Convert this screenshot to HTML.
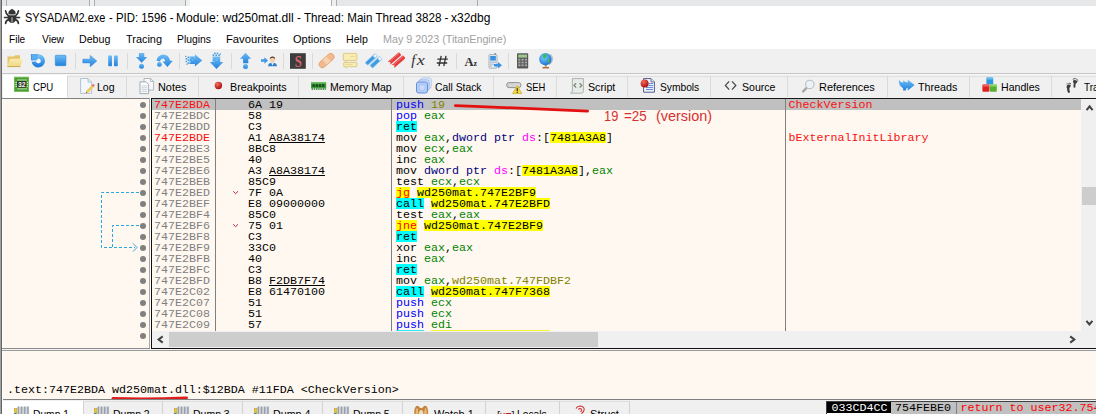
<!DOCTYPE html><html><head><meta charset="utf-8"><title>x32dbg</title><style>
*{box-sizing:border-box}
html,body{margin:0;padding:0}
body{width:1096px;height:414px;overflow:hidden;position:relative;background:#fff;font-family:"Liberation Sans",sans-serif;font-size:12px;color:#000}
div,svg{position:absolute}
svg{overflow:visible}
b{font-weight:normal}
.t{white-space:pre;transform-origin:0 0}
.m{font-family:"Liberation Mono",monospace;font-size:11.67px;line-height:11px;white-space:pre;height:11px}
.m b{display:inline-block;height:10.5px;margin-top:-1px;padding-top:1px;vertical-align:top}
.ad{left:154px;color:#808080}
.ad.red{color:#f81010}
.by{left:248px;color:#000}
.ds{left:396px;color:#000}
.cm{left:788.5px;color:#f81010}
.pp{color:#0000ff}.v{color:#828200}.r{color:#008300}.t2{color:#000080}.s{color:#ff00ff}
.a{background:#ffff00}.c{background:#00ffff}.j{background:#ffff00;color:#ff0000}
u{text-decoration:underline;text-underline-offset:1px;text-decoration-thickness:1px}
.dot{width:6px;height:6px;border-radius:3px;background:#808080;left:139.5px}
</style></head><body>
<svg width="0" height="0" style="position:absolute"><defs>
<linearGradient id="gb" x1="0" y1="0" x2="0" y2="1"><stop offset="0" stop-color="#6cbcf6"/><stop offset="1" stop-color="#2482dc"/></linearGradient>
<linearGradient id="gy" x1="0" y1="0" x2="0" y2="1"><stop offset="0" stop-color="#f8ecb0"/><stop offset="1" stop-color="#f0d884"/></linearGradient>
<linearGradient id="gr" x1="0" y1="0" x2="0" y2="1"><stop offset="0" stop-color="#f46a6a"/><stop offset="1" stop-color="#d82020"/></linearGradient>
<radialGradient id="gg" cx="0.4" cy="0.35" r="0.7"><stop offset="0" stop-color="#7ad0ff"/><stop offset="1" stop-color="#1a6ad0"/></radialGradient>
<radialGradient id="grb" cx="0.35" cy="0.3" r="0.7"><stop offset="0" stop-color="#f07060"/><stop offset="1" stop-color="#b01010"/></radialGradient>
</defs></svg>
<div style="left:0;top:0;width:1096px;height:5.5px;background:#e6e7e9"></div>
<div style="left:189.5px;top:0;width:141.5px;height:5.5px;background:#fdfdfd"></div>
<div style="left:6px;top:0;width:1px;height:5.5px;background:#adadad"></div>
<div style="left:89px;top:0;width:1px;height:5.5px;background:#adadad"></div>
<div style="left:94px;top:0;width:1px;height:5.5px;background:#adadad"></div>
<div style="left:185px;top:0;width:1px;height:5.5px;background:#adadad"></div>
<div style="left:331px;top:0;width:1px;height:5.5px;background:#adadad"></div>
<div style="left:336px;top:0;width:1px;height:5.5px;background:#adadad"></div>
<div style="left:477px;top:0;width:1px;height:5.5px;background:#adadad"></div>
<div style="left:90px;top:0;width:4px;height:5.5px;background:#efeff0"></div>
<div style="left:186px;top:0;width:3.5px;height:5.5px;background:#efeff0"></div>
<div style="left:332px;top:0;width:4px;height:5.5px;background:#efeff0"></div>
<div class="t" style="left:25.20px;top:11px;font-size:12px;line-height:14px;height:14px;transform:scaleX(0.9121);color:#000;">SYSADAM2.exe</div>
<div class="t" style="left:109.00px;top:11px;font-size:12px;line-height:14px;height:14px;transform:scaleX(0.9481);color:#000;">- PID: 1596 -</div>
<div class="t" style="left:176.20px;top:11px;font-size:12px;line-height:14px;height:14px;transform:scaleX(1.0083);color:#000;">Module: wd250mat.dll</div>
<div class="t" style="left:297.00px;top:11px;font-size:12px;line-height:14px;height:14px;transform:scaleX(0.9692);color:#000;">- Thread: Main Thread 3828 -</div>
<div class="t" style="left:450.80px;top:11px;font-size:12px;line-height:14px;height:14px;transform:scaleX(0.9982);color:#000;">x32dbg</div>
<svg style="left:4px;top:9px" width="16" height="15" viewBox="0 0 16 15"><g fill="#333"><path d="M8 -0.2 L10.4 1.4 Q11.9 2.6 11.6 4.2 Q11.2 5.4 10 5.6 H6 Q4.800 5.400 4.400 4.200 Q4.100 2.600 5.600 1.400 Z"/><path d="M3.900 6.300 H12.100 Q12.700 8.600 12.100 10.800 Q10.900 13.900 8 13.900 Q5.100 13.900 3.900 10.800 Q3.300 8.600 3.900 6.300 Z"/></g><path d="M8 8.200 V13.400" stroke="#9a9a9a" stroke-width="1.5"/><g fill="none" stroke="#333" stroke-width="1.7" stroke-linecap="round"><path d="M4.600 7 Q2 5.400 1.600 1.800 M11.400 7 Q14 5.400 14.400 1.800 M4.400 8.500 H0.500 M11.600 8.500 H15.500 M4.600 10.600 Q2 11.400 1.600 14.300 M11.400 10.600 Q14 11.400 14.400 14.300"/></g></svg>
<div class="t" style="left:9.30px;top:33px;font-size:11px;line-height:12px;height:12px;transform:scaleX(0.9140);color:#000;">File</div>
<div class="t" style="left:41.50px;top:33px;font-size:11px;line-height:12px;height:12px;transform:scaleX(0.9305);color:#000;">View</div>
<div class="t" style="left:79.20px;top:33px;font-size:11px;line-height:12px;height:12px;transform:scaleX(0.9656);color:#000;">Debug</div>
<div class="t" style="left:125.50px;top:33px;font-size:11px;line-height:12px;height:12px;transform:scaleX(0.9925);color:#000;">Tracing</div>
<div class="t" style="left:176.50px;top:33px;font-size:11px;line-height:12px;height:12px;transform:scaleX(0.9424);color:#000;">Plugins</div>
<div class="t" style="left:225.50px;top:33px;font-size:11px;line-height:12px;height:12px;transform:scaleX(1.0223);color:#000;">Favourites</div>
<div class="t" style="left:292.90px;top:33px;font-size:11px;line-height:12px;height:12px;transform:scaleX(0.9998);color:#000;">Options</div>
<div class="t" style="left:346.00px;top:33px;font-size:11px;line-height:12px;height:12px;transform:scaleX(0.9636);color:#000;">Help</div>
<div class="t" style="left:383.20px;top:33px;font-size:11px;line-height:12px;height:12px;transform:scaleX(0.9773);color:#a0a0a0;">May 9 2023 (TitanEngine)</div>
<div style="left:0;top:49px;width:1096px;height:25px;background:#f0f0f0"></div>
<div style="left:0;top:73px;width:1096px;height:1px;background:#c6c6c6"></div>
<svg style="left:7px;top:53px" width="17" height="17"><path d="M0.500 3.600 H7 L8.200 2.200 H12.400 Q13 2.200 13 2.800 V13.600 H0.500 Z" fill="#e4c464"/><path d="M0.500 13.700 L2.600 6.200 Q2.800 5.700 3.400 5.700 H15.200 Q15.800 5.700 15.600 6.300 L13.400 13.700 Z" fill="url(#gy)"/><path d="M0.500 13.600 H13.400" stroke="#c8a448" stroke-width="0.900"/></svg>
<svg style="left:30px;top:53px" width="17" height="17"><path d="M8.300 3.400 A4.500 4.500 0 1 1 3.820 8.400" fill="none" stroke="url(#gb)" stroke-width="4.400"/><path d="M1 1 H8.300 V7.300 H1.300 Z" fill="#5aaef0"/><path d="M1.300 1.200 L1.600 7 H7" fill="none" stroke="#3a92e2" stroke-width="0.900"/><circle cx="8.500" cy="8.100" r="2.200" fill="#f4f6f8"/><path d="M2.600 7.800 H8" stroke="#d4e8f8" stroke-width="0.800"/></svg>
<svg style="left:53px;top:53px" width="17" height="17"><rect x="2.3" y="2.3" width="10.6" height="10.4" rx="0.8" fill="url(#gb)" stroke="#2a84dc" stroke-width="0.6"/></svg>
<svg style="left:81px;top:53px" width="17" height="17"><path d="M1.8 6.2 h7.4 v-3.8 l6.6 5.6 l-6.6 5.8 v-3.9 h-7.4z" fill="url(#gb)" stroke="#2a84dc" stroke-width="0.5"/></svg>
<svg style="left:104px;top:53px" width="17" height="17"><rect x="4.2" y="2.6" width="3.8" height="10.6" rx="0.9" fill="url(#gb)"/><rect x="10" y="2.6" width="3.8" height="10.6" rx="0.9" fill="url(#gb)"/></svg>
<svg style="left:134px;top:53px" width="17" height="17"><path d="M4.900 -0.100 h5.400 v4 h3 l-5.700 5.900 l-5.700-5.900 h3z" fill="url(#gb)"/><circle cx="7.500" cy="13.200" r="2.500" fill="url(#gb)"/></svg>
<svg style="left:157px;top:53px" width="17" height="17"><path d="M-0.4 7.800 Q0.200 2.400 6 1.600 Q11.800 1.600 13 7.600 L15.700 8 L10.400 14 L5.600 8.600 L8.200 8.200 Q7.800 5.600 6.200 5.400 Q3.800 5.600 2.800 8.400 Z" fill="url(#gb)"/><circle cx="2.400" cy="11.400" r="2.400" fill="url(#gb)"/></svg>
<svg style="left:185px;top:53px" width="17" height="17"><path d="M4.600 3.600 h5.300 v-2.300 l7.300 6.100 l-7.300 6.200 v-2.700 h-5.300z" fill="url(#gb)"/><g fill="#3d98e6"><rect x="2.600" y="3.600" width="1.600" height="1.600"/><rect x="2.600" y="6.400" width="1.600" height="1.600"/><rect x="2.600" y="9.200" width="1.600" height="1.600"/><rect x="0.600" y="5" width="1.600" height="1.600"/><rect x="0.600" y="7.800" width="1.400" height="1.400"/><rect x="1.400" y="10.600" width="1.200" height="1.200"/><rect x="0.200" y="2.800" width="1.200" height="1.200"/></g><g fill="#8cc8f4"><rect x="5" y="4.400" width="1.200" height="1.200"/><rect x="7" y="6.400" width="1.200" height="1.200"/><rect x="5" y="8.400" width="1.200" height="1.200"/><rect x="9" y="4.400" width="1.200" height="1.200"/></g></svg>
<svg style="left:208px;top:53px" width="17" height="17"><path d="M4.600 3.400 h7.600 v5.700 h3.100 l-6.800 6.900 l-6.700-6.900 h2.800z" fill="url(#gb)"/><g fill="#3d98e6"><rect x="4.600" y="1.400" width="1.600" height="1.600"/><rect x="7.400" y="1.400" width="1.600" height="1.600"/><rect x="10.200" y="1.400" width="1.600" height="1.600"/><rect x="6" y="-0.400" width="1.600" height="1.400"/><rect x="8.800" y="-0.400" width="1.400" height="1.400"/><rect x="11.800" y="0.400" width="1.200" height="1.200"/></g><g fill="#8cc8f4"><rect x="5.600" y="4.400" width="1.200" height="1.200"/><rect x="7.800" y="6.400" width="1.200" height="1.200"/><rect x="9.800" y="4.400" width="1.200" height="1.200"/><rect x="5.600" y="8" width="1.200" height="1.200"/></g></svg>
<svg style="left:237px;top:53px" width="17" height="17"><path d="M8.500 -0.200 l5.600 5.900 h-2.800 v4.500 h-5.200 v-4.500 h-3.100z" fill="url(#gb)"/><circle cx="8.500" cy="13.600" r="2.500" fill="url(#gb)"/></svg>
<svg style="left:260px;top:53px" width="17" height="17"><path d="M1 6.300 h3.400 v-2 l3.600 3.200 l-3.600 3.200 v-2 h-3.400z" fill="#3a9aea"/><path d="M8 13.200 q.2-3.400 4.500-3.400 q4.300 0 4.500 3.400z" fill="#2f7fd0"/><path d="M11.300 9.900 l1.200 2.800 l1.200-2.800z" fill="#f4f4f4"/><circle cx="12.500" cy="6.600" r="2.600" fill="#f0d0b0"/><path d="M9.800 6.400 a2.700 2.900 0 0 1 5.400 0 q-.6-1.800-2.700-1.600 q-2.100-.2-2.700 1.600z" fill="#50301c"/></svg>
<svg style="left:290px;top:53px" width="17" height="17"><rect x="0" y="0.200" width="15.800" height="15.600" fill="#3c3c3c"/><text x="0" y="0" font-family="Liberation Serif" font-weight="bold" font-size="16" fill="#d4646c" text-anchor="middle" transform="translate(8.200 13.600) scale(0.800 1)">S</text></svg>
<svg style="left:318px;top:52px" width="17" height="17"><g transform="rotate(-42 8.6 8.6)"><rect x="-0.4" y="5.2" width="18" height="6.8" rx="3.4" fill="#f2b98e" stroke="#e09a68" stroke-width="0.7"/><rect x="6" y="5.6" width="5.2" height="6" fill="#f8d2b2"/></g></svg>
<svg style="left:342px;top:53px" width="17" height="17"><path d="M2 0.400 h12.200 q.7 0 .7 .7 v5.600 q0 .7-.7 .7 h-9 l-1.600 1.300 v-1.300 h-1.600 q-.7 0-.7-.7 v-5.600 q0-.7 .7-.7z" fill="#f8edb4" stroke="#d6bc68" stroke-width="0.700"/><path d="M2.400 9.400 h11.800 q.7 0 .7 .7 v2.900 q0 .7-.7 .7 h-8.600 l-1.600 1.400 v-1.400 h-1.600 q-.7 0-.7-.7 v-2.900 q0-.7 .7-.7z" fill="#f8edb4" stroke="#d6bc68" stroke-width="0.700"/><path d="M8 3.400 h5 M3.600 11.600 h7" stroke="#e4d088" stroke-width="0.800"/></svg>
<svg style="left:365px;top:53px" width="17" height="17"><g transform="translate(6.200 6.500) rotate(-43)"><rect x="-6.600" y="-1.900" width="13.200" height="3.800" rx="0.800" fill="#3d9ce2" stroke="#a4cef0" stroke-width="0.800"/><rect x="3.600" y="-1.700" width="3.400" height="3.400" rx="1.400" fill="#f0f6fc" stroke="#9cc4e8" stroke-width="0.500"/></g><g transform="translate(11 9.300) rotate(-43)"><rect x="-6.600" y="-1.900" width="13.200" height="3.800" rx="0.800" fill="#3d9ce2" stroke="#a4cef0" stroke-width="0.800"/><rect x="3.600" y="-1.700" width="3.400" height="3.400" rx="1.400" fill="#f0f6fc" stroke="#9cc4e8" stroke-width="0.500"/></g></svg>
<svg style="left:388px;top:52px" width="17" height="17"><g transform="translate(6.600 6.400) rotate(-41)"><path d="M-7.400 -1.900 h14 q.8 0 .8 .8 v2.200 q0 .8-.8 .8 h-14 l1.800-1.900z" fill="#e83c3c"/><path d="M-6 -0.900 h12.600" stroke="#f88080" stroke-width="0.800"/></g><g transform="translate(10.600 9.600) rotate(-41)"><path d="M-7.400 -1.900 h14 q.8 0 .8 .8 v2.200 q0 .8-.8 .8 h-14 l1.800-1.900z" fill="#e83c3c"/><path d="M-6 -0.900 h12.600" stroke="#f88080" stroke-width="0.800"/></g></svg>
<svg style="left:410px;top:52px" width="17" height="17"><text x="1.200" y="12.800" font-family="Liberation Serif" font-style="italic" font-size="15" fill="#303030">f</text><text x="0" y="0" font-family="Liberation Serif" font-style="italic" font-size="14" fill="#303030" transform="translate(6.800 13) scale(1.300 1)">x</text></svg>
<svg style="left:435px;top:53px" width="17" height="17"><g stroke="#303030" stroke-width="1.300" fill="none"><path d="M6.200 2.800 L4 13.200 M11 2.800 L8.800 13.200 M2.400 6.200 H12.800 M1.800 10 H12.200"/></g></svg>
<svg style="left:463px;top:53px" width="17" height="17"><text x="1.400" y="12.700" font-family="Liberation Serif" font-weight="bold" font-size="12.500" fill="#303030">A</text><text x="10.400" y="12.700" font-family="Liberation Serif" font-weight="bold" font-size="8" fill="#303030">z</text></svg>
<svg style="left:487px;top:53px" width="17" height="17"><rect x="2" y="1.6" width="8" height="13.6" rx="1" fill="#e8ecf0" stroke="#8898a8" stroke-width="0.7"/><rect x="7.6" y="0" width="1.2" height="2" fill="#7888a0"/><rect x="3.2" y="3" width="5.6" height="4.6" fill="#3a90e0"/><g fill="#9aa8b8"><rect x="3.2" y="8.6" width="1.4" height="1.2"/><rect x="5.3" y="8.6" width="1.4" height="1.2"/><rect x="7.4" y="8.6" width="1.4" height="1.2"/><rect x="3.2" y="10.6" width="1.4" height="1.2"/><rect x="5.3" y="10.6" width="1.4" height="1.2"/><rect x="3.2" y="12.6" width="1.4" height="1.2"/></g><path d="M7 11 h4 v-2 l4 3.2 l-4 3.2 v-2 h-4z" fill="#3a92e4"/></svg>
<svg style="left:515px;top:53px" width="17" height="17"><rect x="2" y="0.2" width="11.2" height="15.4" rx="0.8" fill="#585858"/><rect x="3.2" y="1.6" width="8.8" height="3" fill="#9cc890"/><g fill="#a8a8a8"><rect x="3.2" y="5.8" width="2.2" height="1.8"/><rect x="6.5" y="5.8" width="2.2" height="1.8"/><rect x="9.8" y="5.8" width="2.2" height="1.8"/><rect x="3.2" y="8.6" width="2.2" height="1.8"/><rect x="6.5" y="8.6" width="2.2" height="1.8"/><rect x="9.8" y="8.6" width="2.2" height="1.8"/><rect x="3.2" y="11.4" width="2.2" height="1.8"/><rect x="6.5" y="11.4" width="2.2" height="1.8"/><rect x="9.8" y="11.4" width="2.2" height="1.8"/></g></svg>
<svg style="left:538px;top:52px" width="17" height="17"><path d="M4.6 15 h6.4 v1.4 h-6.4z" fill="#b06030"/><path d="M6.8 13 h2 v2.4 h-2z" fill="#c8a070"/><path d="M12.6 2.2 a7 7 0 0 1 -1.4 10.6" fill="none" stroke="#a8b0b8" stroke-width="1"/><circle cx="7.4" cy="7.2" r="6.2" fill="url(#gg)"/><path d="M5 2.4 q2-1 3.6 .2 q1 1.6-.6 2.6 q-.6 1.8-2.2 1.2 q-1.6-.8-.8-4z M9.6 7.2 q1.8-.4 2.4 1 q-.2 2-1.8 2.8 q-1-1.6-.6-3.8z" fill="#3cb860"/></svg>
<div style="left:75px;top:53px;width:1px;height:16px;background:#dadada"></div>
<div style="left:127px;top:53px;width:1px;height:16px;background:#dadada"></div>
<div style="left:179px;top:53px;width:1px;height:16px;background:#dadada"></div>
<div style="left:231px;top:53px;width:1px;height:16px;background:#dadada"></div>
<div style="left:283px;top:53px;width:1px;height:16px;background:#dadada"></div>
<div style="left:312px;top:53px;width:1px;height:16px;background:#dadada"></div>
<div style="left:456px;top:53px;width:1px;height:16px;background:#dadada"></div>
<div style="left:508px;top:53px;width:1px;height:16px;background:#dadada"></div>
<div style="left:0;top:74px;width:1096px;height:24px;background:#f0f0f0"></div>
<div style="left:0;top:74px;width:1096px;height:1px;background:#f6f6f6"></div>
<div style="left:67px;top:76px;width:1029px;height:1px;background:#e0e0e0"></div>
<div style="left:3px;top:75px;width:64px;height:23px;background:#fff"></div>
<div class="t" style="left:33.20px;top:81px;font-size:11px;line-height:12px;height:12px;transform:scaleX(0.8741);color:#000;">CPU</div>
<div class="t" style="left:97.20px;top:81px;font-size:11px;line-height:12px;height:12px;transform:scaleX(0.9590);color:#000;">Log</div>
<div class="t" style="left:158.20px;top:81px;font-size:11px;line-height:12px;height:12px;transform:scaleX(0.9883);color:#000;">Notes</div>
<div class="t" style="left:230.00px;top:81px;font-size:11px;line-height:12px;height:12px;transform:scaleX(0.9761);color:#000;">Breakpoints</div>
<div class="t" style="left:330.00px;top:81px;font-size:11px;line-height:12px;height:12px;transform:scaleX(0.9614);color:#000;">Memory Map</div>
<div class="t" style="left:435.20px;top:81px;font-size:11px;line-height:12px;height:12px;transform:scaleX(0.9391);color:#000;">Call Stack</div>
<div class="t" style="left:525.70px;top:81px;font-size:11px;line-height:12px;height:12px;transform:scaleX(0.8533);color:#000;">SEH</div>
<div class="t" style="left:588.20px;top:81px;font-size:11px;line-height:12px;height:12px;transform:scaleX(0.9709);color:#000;">Script</div>
<div class="t" style="left:659.50px;top:81px;font-size:11px;line-height:12px;height:12px;transform:scaleX(0.9294);color:#000;">Symbols</div>
<div class="t" style="left:742.00px;top:81px;font-size:11px;line-height:12px;height:12px;transform:scaleX(0.9612);color:#000;">Source</div>
<div class="t" style="left:819.00px;top:81px;font-size:11px;line-height:12px;height:12px;transform:scaleX(0.9920);color:#000;">References</div>
<div class="t" style="left:918.30px;top:81px;font-size:11px;line-height:12px;height:12px;transform:scaleX(0.9764);color:#000;">Threads</div>
<div class="t" style="left:1000.70px;top:81px;font-size:11px;line-height:12px;height:12px;transform:scaleX(0.9614);color:#000;">Handles</div>
<div class="t" style="left:1083.50px;top:81px;font-size:11px;line-height:12px;height:12px;transform:scaleX(0.9022);color:#000;">Trace</div>
<svg style="left:14px;top:77px" width="17" height="17"><rect x="0" y="-0.200" width="15" height="15" fill="#4a9a32"/><rect x="0.500" y="0.300" width="14" height="14" fill="none" stroke="#7cc45c" stroke-width="0.800"/><g stroke="#d4f4c0" stroke-width="1"><path d="M4 2.200 V3.800 M6 2.200 V3.800 M8 2.200 V3.800 M10 2.200 V3.800 M12 2.200 V3.800 M4 10.800 V12.600 M6 10.800 V12.600 M8 10.800 V12.600 M10 10.800 V12.600 M12 10.800 V12.600 M1.400 5.400 H3 M1.400 7.400 H3 M1.400 9.400 H3 M12.400 5.400 H14 M12.400 7.400 H14 M12.400 9.400 H14"/></g><rect x="3" y="4" width="9.400" height="6.700" rx="0.800" fill="#2c3428"/><text x="7.700" y="9.800" font-family="Liberation Sans" font-weight="bold" font-size="6.800" fill="#f4f4ec" text-anchor="middle">32</text></svg>
<svg style="left:79px;top:78px" width="17" height="17"><path d="M1.600 0.500 h7.400 l3.600 3.600 v11.300 h-11z" fill="#f2f7fc" stroke="#a4b4c8" stroke-width="0.800"/><path d="M9 0.500 v3.600 h3.600" fill="#d8e4f0" stroke="#a4b4c8" stroke-width="0.700"/><path d="M6.800 15.200 l.8-2.800 l5-5.200 l2 2 l-5 5.200z" fill="#eccc5c"/><path d="M12.600 7.200 l1-1 q.9-.5 1.600 .3 q.7 .8 .2 1.600 l-.8 1.100z" fill="#e8707c"/><path d="M6.800 15.200 l.4-1.400 l1 1z" fill="#504030"/></svg>
<svg style="left:139px;top:78px" width="17" height="17"><path d="M5 0.5 h6.6 l3 3 v8.6 h-9.6z" fill="#f6f8fa" stroke="#a0a8b0" stroke-width="0.8"/><path d="M11.6 0.5 v3 h3" fill="none" stroke="#a0a8b0" stroke-width="0.7"/><path d="M1 3.8 h6 l2.6 2.6 v9.2 h-8.6z" fill="#fafcfe" stroke="#9098a0" stroke-width="0.8"/><g stroke="#b8c0cc" stroke-width="0.7"><path d="M2.4 8 h5.8 M2.4 9.8 h5.8 M2.4 11.6 h5.8 M2.4 13.4 h5.8"/></g></svg>
<svg style="left:214px;top:81px" width="17" height="17"><circle cx="4.4" cy="4.5" r="3.7" fill="url(#grb)"/></svg>
<svg style="left:311px;top:82px" width="17" height="17"><path d="M0 0.3 h15.2 v6 h-15.2z" fill="#3e9e3e"/><path d="M0 0.3 h15.2 v1.2 h-15.2z" fill="#6cc060"/><g fill="#1c4c1c"><rect x="1.4" y="2.2" width="2.4" height="2.8"/><rect x="4.6" y="2.2" width="2.4" height="2.8"/><rect x="7.8" y="2.2" width="2.4" height="2.8"/><rect x="11" y="2.2" width="2.4" height="2.8"/></g><g fill="#2e7e2e"><rect x="0.6" y="6.3" width="1.4" height="1.5"/><rect x="2.8" y="6.3" width="1.4" height="1.5"/><rect x="5" y="6.3" width="1.4" height="1.5"/><rect x="7.2" y="6.3" width="1.4" height="1.5"/><rect x="9.4" y="6.3" width="1.4" height="1.5"/><rect x="11.6" y="6.3" width="1.4" height="1.5"/><rect x="13.6" y="6.3" width="1.2" height="1.5"/></g></svg>
<svg style="left:416px;top:77px" width="17" height="17"><rect x="4.6" y="0.9" width="10.6" height="10.6" rx="2" fill="#e2ecfa" stroke="#a8c0ea" stroke-width="0.8"/><rect x="2.6" y="2.9" width="10.6" height="10.6" rx="2" fill="#d2e0f8" stroke="#8cacea" stroke-width="0.8"/><rect x="0.5" y="5" width="11" height="11" rx="2" fill="#b4ccf4" stroke="#5a88e0" stroke-width="0.9"/><circle cx="6" cy="10.5" r="3" fill="#c8dcf8" stroke="#a0bcf0" stroke-width="0.6"/></svg>
<svg style="left:506px;top:82px" width="17" height="17"><rect x="0.6" y="0.6" width="14.4" height="5" rx="2.5" fill="#d8d8d8" stroke="#888" stroke-width="0.9"/><rect x="2.4" y="2.3" width="5" height="1.6" rx="0.8" fill="#f4f4f4" stroke="#999" stroke-width="0.4"/><path d="M11.2 3.6 l4.6 8 h-9.2z" fill="#f4dc3c" stroke="#c8a820" stroke-width="0.7"/><rect x="10.7" y="6.2" width="1.1" height="3" fill="#222"/><rect x="10.7" y="9.8" width="1.1" height="1.1" fill="#222"/></svg>
<svg style="left:570px;top:78px" width="17" height="17"><path d="M2.400 0.600 h11 v12.600 q0 2-2 2 h-10.800 q1.800-.6 1.800-2z" fill="#e8ece8" stroke="#a4aca4" stroke-width="0.900"/><path d="M6.200 5.200 l-2.200 2.200 l2.200 2.200 M9.600 5.200 l2.200 2.200 l-2.200 2.200" fill="none" stroke="#7c847c" stroke-width="1.300"/></svg>
<svg style="left:640px;top:78px" width="17" height="17"><path d="M3.6 0.6 h7.4 l3.4 3.4 v10.2 h-10.8z" fill="#f4f8fe" stroke="#3c4c7c" stroke-width="0.9"/><path d="M11 0.6 v3.4 h3.4" fill="#dce6f4" stroke="#3c4c7c" stroke-width="0.7"/><g stroke="#4a78d0" stroke-width="0.9"><path d="M8.4 5.6 h4.6 M8.4 7.6 h4.6 M6 9.6 h7 M6 11.6 h7"/></g><circle cx="4.600" cy="5.400" r="4" fill="url(#grb)"/></svg>
<svg style="left:724px;top:80px" width="17" height="17"><path d="M5.2 1.4 L1.4 5.4 L5.2 9.6 M8 1.4 L11.8 5.4 L8 9.6" fill="none" stroke="#484848" stroke-width="1.3"/></svg>
<svg style="left:802px;top:79px" width="17" height="17"><path d="M1.2 12.4 L5.4 8" stroke="#a8a8a8" stroke-width="2.4" stroke-linecap="round"/><circle cx="7.8" cy="5.4" r="4.2" fill="#eef2f6" stroke="#b8c0c8" stroke-width="1.1"/></svg>
<svg style="left:898px;top:79px" width="17" height="17"><path d="M0.800 0.800 Q2.200 3.400 5.400 3.600 L5 1.200 Q6.600 3.200 9.800 3.400 V0.800 L16.600 6 L9.800 11.400 V8.800 Q8 8.800 7.800 11.400 H5.200 Q5.600 8.800 3.800 8.200 Q0.800 6.600 0.800 0.800 Z" fill="url(#gb)"/></svg>
<svg style="left:982px;top:77px" width="17" height="17"><rect x="4.4" y="0.6" width="6.8" height="7" rx="1" fill="#2f98e0"/><rect x="4.4" y="0.6" width="6.8" height="2" rx="1" fill="#66bdf0"/><rect x="0.4" y="7.4" width="7" height="7.4" rx="1" fill="#e02020"/><rect x="0.4" y="7.4" width="7" height="2" rx="1" fill="#f46060"/><rect x="7.8" y="7.4" width="7" height="7.4" rx="1" fill="#58b030"/><rect x="7.8" y="7.4" width="7" height="2" rx="1" fill="#90d868"/></svg>
<svg style="left:1066px;top:78px" width="17" height="17"><g fill="#3c3c3c"><path d="M0.6 8.4 q.4-1.6 2-1.8 q1.8-.2 2.2 .6 q-.2 1.6-1.4 2.8 q-.2 2.2 .6 4 q-.6 1.2-1.8 .8 q-1.2-2-1.2-4.600 q-.6-.8-.4-1.800z"/><circle cx="0.9" cy="6" r=".55"/><circle cx="2.1" cy="5.3" r=".55"/><circle cx="3.4" cy="5.2" r=".55"/><circle cx="4.6" cy="5.6" r=".55"/><path d="M7 3 q.2-1 1.800-1 q1.800 .2 2.800 1.400 q-.6 1.600-1.800 2.200 q-.6 1.800-.4 3.600 q-.8 .8-1.800 .200 q-.4-2.200 .2-4.200 q-1-1-.8-2.200z"/><circle cx="7.200" cy="1.100" r=".55"/><circle cx="8.500" cy=".6" r=".55"/><circle cx="9.800" cy=".7" r=".55"/><circle cx="11" cy="1.300" r=".55"/><circle cx="11.800" cy="2.300" r=".5"/></g></svg>
<div style="left:67px;top:76px;width:1px;height:21px;background:#dadada"></div>
<div style="left:126px;top:76px;width:1px;height:21px;background:#dadada"></div>
<div style="left:198px;top:76px;width:1px;height:21px;background:#dadada"></div>
<div style="left:298px;top:76px;width:1px;height:21px;background:#dadada"></div>
<div style="left:403px;top:76px;width:1px;height:21px;background:#dadada"></div>
<div style="left:493px;top:76px;width:1px;height:21px;background:#dadada"></div>
<div style="left:556px;top:76px;width:1px;height:21px;background:#dadada"></div>
<div style="left:627px;top:76px;width:1px;height:21px;background:#dadada"></div>
<div style="left:710px;top:76px;width:1px;height:21px;background:#dadada"></div>
<div style="left:787px;top:76px;width:1px;height:21px;background:#dadada"></div>
<div style="left:887px;top:76px;width:1px;height:21px;background:#dadada"></div>
<div style="left:969px;top:76px;width:1px;height:21px;background:#dadada"></div>
<div style="left:1051px;top:76px;width:1px;height:21px;background:#dadada"></div>
<div style="left:3px;top:98px;width:1093px;height:250px;background:#fff8f0"></div>
<div style="left:2px;top:97.700px;width:149px;height:1.200px;background:#808080"></div>
<div style="left:150.6px;top:98px;width:946px;height:1.2px;background:#181818"></div>
<div style="left:149px;top:98px;width:1px;height:250px;background:#a8a8a8"></div>
<div style="left:150px;top:98px;width:1px;height:250px;background:#fdfdfd"></div>
<div style="left:150.8px;top:98px;width:1.4px;height:250.8px;background:#101010"></div>
<div style="left:152.2px;top:99px;width:928.8px;height:11px;background:#c0c0c0"></div>
<div style="left:215px;top:99px;width:1px;height:232px;background:#808080"></div>
<div style="left:391px;top:99px;width:1px;height:232px;background:#808080"></div>
<div style="left:785px;top:99px;width:1px;height:232px;background:#808080"></div>
<div class="dot" style="top:101.7px"></div>
<div class="m ad red" style="top:100px">747E2BDA</div>
<div class="m by" style="top:100px">6A 19</div>
<div class="m ds" style="top:100px"><b class="pp">push</b> <b class="v">19</b></div>
<div class="m cm" style="top:100px">CheckVersion</div>
<div class="dot" style="top:112.7px"></div>
<div class="m ad" style="top:111px">747E2BDC</div>
<div class="m by" style="top:111px">58</div>
<div class="m ds" style="top:111px"><b class="pp">pop</b> <b class="r">eax</b></div>
<div class="dot" style="top:123.7px"></div>
<div class="m ad" style="top:122px">747E2BDD</div>
<div class="m by" style="top:122px">C3</div>
<div class="m ds" style="top:122px"><b class="c">ret</b></div>
<div class="dot" style="top:134.7px"></div>
<div class="m ad red" style="top:133px">747E2BDE</div>
<div class="m by" style="top:133px">A1 <u>A8A38174</u></div>
<div class="m ds" style="top:133px">mov <b class="r">eax</b>,<b class="t2">dword ptr</b> <b class="s">ds</b>:[<b class="a">7481A3A8</b>]</div>
<div class="m cm" style="top:133px">bExternalInitLibrary</div>
<div class="dot" style="top:145.7px"></div>
<div class="m ad" style="top:144px">747E2BE3</div>
<div class="m by" style="top:144px">8BC8</div>
<div class="m ds" style="top:144px">mov <b class="r">ecx</b>,<b class="r">eax</b></div>
<div class="dot" style="top:156.7px"></div>
<div class="m ad" style="top:155px">747E2BE5</div>
<div class="m by" style="top:155px">40</div>
<div class="m ds" style="top:155px">inc <b class="r">eax</b></div>
<div class="dot" style="top:167.7px"></div>
<div class="m ad" style="top:166px">747E2BE6</div>
<div class="m by" style="top:166px">A3 <u>A8A38174</u></div>
<div class="m ds" style="top:166px">mov <b class="t2">dword ptr</b> <b class="s">ds</b>:[<b class="a">7481A3A8</b>],<b class="r">eax</b></div>
<div class="dot" style="top:178.7px"></div>
<div class="m ad" style="top:177px">747E2BEB</div>
<div class="m by" style="top:177px">85C9</div>
<div class="m ds" style="top:177px">test <b class="r">ecx</b>,<b class="r">ecx</b></div>
<div class="dot" style="top:189.7px"></div>
<div class="m ad" style="top:188px">747E2BED</div>
<svg style="left:232px;top:191px" width="7" height="5"><path d="M1.2 0.3L3.6 2.7L6 0.3" fill="none" stroke="#b8283c" stroke-width="1"/></svg>
<div class="m by" style="top:188px">7F 0A</div>
<div class="m ds" style="top:188px"><b class="j">jg</b> <b class="a">wd250mat.747E2BF9</b></div>
<div class="dot" style="top:200.7px"></div>
<div class="m ad" style="top:199px">747E2BEF</div>
<div class="m by" style="top:199px">E8 09000000</div>
<div class="m ds" style="top:199px"><b class="c">call</b> <b class="a">wd250mat.747E2BFD</b></div>
<div class="dot" style="top:211.7px"></div>
<div class="m ad" style="top:210px">747E2BF4</div>
<div class="m by" style="top:210px">85C0</div>
<div class="m ds" style="top:210px">test <b class="r">eax</b>,<b class="r">eax</b></div>
<div class="dot" style="top:222.7px"></div>
<div class="m ad" style="top:221px">747E2BF6</div>
<svg style="left:232px;top:224px" width="7" height="5"><path d="M1.2 0.3L3.6 2.7L6 0.3" fill="none" stroke="#b8283c" stroke-width="1"/></svg>
<div class="m by" style="top:221px">75 01</div>
<div class="m ds" style="top:221px"><b class="j">jne</b> <b class="a">wd250mat.747E2BF9</b></div>
<div class="dot" style="top:233.7px"></div>
<div class="m ad" style="top:232px">747E2BF8</div>
<div class="m by" style="top:232px">C3</div>
<div class="m ds" style="top:232px"><b class="c">ret</b></div>
<div class="dot" style="top:244.7px"></div>
<div class="m ad" style="top:243px">747E2BF9</div>
<div class="m by" style="top:243px">33C0</div>
<div class="m ds" style="top:243px">xor <b class="r">eax</b>,<b class="r">eax</b></div>
<div class="dot" style="top:255.7px"></div>
<div class="m ad" style="top:254px">747E2BFB</div>
<div class="m by" style="top:254px">40</div>
<div class="m ds" style="top:254px">inc <b class="r">eax</b></div>
<div class="dot" style="top:266.7px"></div>
<div class="m ad" style="top:265px">747E2BFC</div>
<div class="m by" style="top:265px">C3</div>
<div class="m ds" style="top:265px"><b class="c">ret</b></div>
<div class="dot" style="top:277.7px"></div>
<div class="m ad" style="top:276px">747E2BFD</div>
<div class="m by" style="top:276px">B8 <u>F2DB7F74</u></div>
<div class="m ds" style="top:276px">mov <b class="r">eax</b>,<b class="v">wd250mat.747FDBF2</b></div>
<div class="dot" style="top:288.7px"></div>
<div class="m ad" style="top:287px">747E2C02</div>
<div class="m by" style="top:287px">E8 61470100</div>
<div class="m ds" style="top:287px"><b class="c">call</b> <b class="a">wd250mat.747F7368</b></div>
<div class="dot" style="top:299.7px"></div>
<div class="m ad" style="top:298px">747E2C07</div>
<div class="m by" style="top:298px">51</div>
<div class="m ds" style="top:298px"><b class="pp">push</b> <b class="r">ecx</b></div>
<div class="dot" style="top:310.7px"></div>
<div class="m ad" style="top:309px">747E2C08</div>
<div class="m by" style="top:309px">51</div>
<div class="m ds" style="top:309px"><b class="pp">push</b> <b class="r">ecx</b></div>
<div class="dot" style="top:321.7px"></div>
<div class="m ad" style="top:320px">747E2C09</div>
<div class="m by" style="top:320px">57</div>
<div class="m ds" style="top:320px"><b class="pp">push</b> <b class="r">edi</b></div>
<div class="dot" style="top:332.7px"></div>
<div style="left:396px;top:330px;width:28px;height:1px;background:#30e8f0"></div>
<div style="left:431px;top:330px;width:119px;height:1px;background:#f8f430"></div>
<svg style="left:95px;top:185px" width="50" height="70"><g fill="none" stroke="#28a8e0" stroke-width="1" stroke-dasharray="3,2"><path d="M44 7.5H6.5V62.5H40"/><path d="M44 40.5H17.5V62.5"/></g><path d="M38 58.5L42 62.5L38 66.5" fill="none" stroke="#28a8e0"/></svg>
<svg style="left:440px;top:98px" width="160" height="20"><path d="M15.400 7.600 C60 9.200 105 11 147.600 13.100" fill="none" stroke="#e41010" stroke-width="2.700" stroke-linecap="round"/></svg>
<div class="t" style="left:603.70px;top:108px;font-size:14px;line-height:16px;height:16px;transform:scaleX(0.9183);color:#d83030;">19</div>
<div class="t" style="left:623.90px;top:108px;font-size:14px;line-height:16px;height:16px;transform:scaleX(0.9601);color:#d83030;">=25</div>
<div class="t" style="left:655.70px;top:108px;font-size:14px;line-height:16px;height:16px;transform:scaleX(1.0302);color:#d83030;">(version)</div>
<div style="left:1081px;top:99px;width:15px;height:232px;background:#f0f0f0"></div>
<div style="left:1082px;top:187px;width:14px;height:18px;background:#cdcdcd"></div>
<div style="left:152px;top:331px;width:944px;height:16.600px;background:#f0f0f0"></div>
<div style="left:169px;top:332px;width:429px;height:15px;background:#cdcdcd"></div>
<svg style="left:0;top:0" width="1096" height="414"><g fill="none" stroke="#404040" stroke-width="2"><path d="M1086.600 110.200 L1089.600 106.400 L1092.600 110.200"/><path d="M1086.400 320.800 L1089.400 324.500 L1092.400 320.800"/><path d="M162.700 336.400 L158.600 339.500 L162.700 342.600"/><path d="M1070.200 336.400 L1074.300 339.500 L1070.200 342.600"/></g></svg>
<div style="left:2px;top:348px;width:148px;height:1px;background:#8a8a8a"></div>
<div style="left:150.8px;top:347.600px;width:946px;height:1.300px;background:#101010"></div>
<div style="left:3px;top:349px;width:1093px;height:1px;background:#f6f6f6"></div>
<div style="left:2px;top:350px;width:1094px;height:1px;background:#989898"></div>
<div style="left:3px;top:351px;width:1093px;height:48px;background:#fff8f0"></div>
<div class="m" style="left:7px;top:385px;color:#000">.text:747E2BDA wd250mat.dll:$12BDA #11FDA &lt;CheckVersion&gt;</div>
<svg style="left:108px;top:392px" width="84" height="8"><path d="M5 6.500 C30 7.300 55 7 78.500 6" fill="none" stroke="#e21a1a" stroke-width="2.900" stroke-linecap="round"/></svg>
<div style="left:3px;top:399px;width:1093px;height:1px;background:#808080"></div>
<div style="left:3px;top:400px;width:1093px;height:14px;background:#f0f0f0"></div>
<div style="left:83px;top:401px;width:546px;height:1px;background:#dedede"></div>
<div style="left:3px;top:401px;width:80px;height:13px;background:#fff"></div>
<div class="t" style="left:32.80px;top:408px;font-size:11px;line-height:12px;height:12px;transform:scaleX(0.9321);color:#000;">Dump 1</div>
<div class="t" style="left:112.70px;top:408px;font-size:11px;line-height:12px;height:12px;transform:scaleX(0.9528);color:#000;">Dump 2</div>
<div class="t" style="left:192.80px;top:408px;font-size:11px;line-height:12px;height:12px;transform:scaleX(0.9528);color:#000;">Dump 3</div>
<div class="t" style="left:272.70px;top:408px;font-size:11px;line-height:12px;height:12px;transform:scaleX(0.9736);color:#000;">Dump 4</div>
<div class="t" style="left:352.80px;top:408px;font-size:11px;line-height:12px;height:12px;transform:scaleX(0.9528);color:#000;">Dump 5</div>
<div class="t" style="left:433.50px;top:408px;font-size:11px;line-height:12px;height:12px;transform:scaleX(0.9965);color:#000;">Watch 1</div>
<div class="t" style="left:516.70px;top:408px;font-size:11px;line-height:12px;height:12px;transform:scaleX(0.9340);color:#000;">Locals</div>
<div class="t" style="left:590.40px;top:408px;font-size:11px;line-height:12px;height:12px;transform:scaleX(1.0059);color:#000;">Struct</div>
<div style="left:83px;top:401px;width:1px;height:13px;background:#d2d2d2"></div>
<div style="left:162px;top:401px;width:1px;height:13px;background:#d2d2d2"></div>
<div style="left:241.5px;top:401px;width:1px;height:13px;background:#d2d2d2"></div>
<div style="left:321.5px;top:401px;width:1px;height:13px;background:#d2d2d2"></div>
<div style="left:401.5px;top:401px;width:1px;height:13px;background:#d2d2d2"></div>
<div style="left:485px;top:401px;width:1px;height:13px;background:#d2d2d2"></div>
<div style="left:558.5px;top:401px;width:1px;height:13px;background:#d2d2d2"></div>
<div style="left:629px;top:401px;width:1px;height:13px;background:#d2d2d2"></div>
<svg style="left:14px;top:406px" width="16" height="8"><rect x="0.3" y="2.6" width="2.6" height="5.4" fill="#ecc830" stroke="#b89820" stroke-width="0.5"/><rect x="3.6" y="0.6" width="11.6" height="7.4" fill="#d0d4d8"/><g fill="#98a0ac"><rect x="3.6" y="0.6" width="1.4" height="7.4"/><rect x="6.8" y="0.6" width="1.4" height="7.4"/><rect x="10" y="0.6" width="1.4" height="7.4"/><rect x="13.2" y="0.6" width="1.4" height="7.4"/></g><rect x="0.3" y="7" width="2" height="1" fill="#3080e0"/></svg>
<svg style="left:94px;top:406px" width="16" height="8"><rect x="0.3" y="2.6" width="2.6" height="5.4" fill="#ecc830" stroke="#b89820" stroke-width="0.5"/><rect x="3.6" y="0.6" width="11.6" height="7.4" fill="#d0d4d8"/><g fill="#98a0ac"><rect x="3.6" y="0.6" width="1.4" height="7.4"/><rect x="6.8" y="0.6" width="1.4" height="7.4"/><rect x="10" y="0.6" width="1.4" height="7.4"/><rect x="13.2" y="0.6" width="1.4" height="7.4"/></g><rect x="0.3" y="7" width="2" height="1" fill="#3080e0"/></svg>
<svg style="left:174px;top:406px" width="16" height="8"><rect x="0.3" y="2.6" width="2.6" height="5.4" fill="#ecc830" stroke="#b89820" stroke-width="0.5"/><rect x="3.6" y="0.6" width="11.6" height="7.4" fill="#d0d4d8"/><g fill="#98a0ac"><rect x="3.6" y="0.6" width="1.4" height="7.4"/><rect x="6.8" y="0.6" width="1.4" height="7.4"/><rect x="10" y="0.6" width="1.4" height="7.4"/><rect x="13.2" y="0.6" width="1.4" height="7.4"/></g><rect x="0.3" y="7" width="2" height="1" fill="#3080e0"/></svg>
<svg style="left:254px;top:406px" width="16" height="8"><rect x="0.3" y="2.6" width="2.6" height="5.4" fill="#ecc830" stroke="#b89820" stroke-width="0.5"/><rect x="3.6" y="0.6" width="11.6" height="7.4" fill="#d0d4d8"/><g fill="#98a0ac"><rect x="3.6" y="0.6" width="1.4" height="7.4"/><rect x="6.8" y="0.6" width="1.4" height="7.4"/><rect x="10" y="0.6" width="1.4" height="7.4"/><rect x="13.2" y="0.6" width="1.4" height="7.4"/></g><rect x="0.3" y="7" width="2" height="1" fill="#3080e0"/></svg>
<svg style="left:334px;top:406px" width="16" height="8"><rect x="0.3" y="2.6" width="2.6" height="5.4" fill="#ecc830" stroke="#b89820" stroke-width="0.5"/><rect x="3.6" y="0.6" width="11.6" height="7.4" fill="#d0d4d8"/><g fill="#98a0ac"><rect x="3.6" y="0.6" width="1.4" height="7.4"/><rect x="6.8" y="0.6" width="1.4" height="7.4"/><rect x="10" y="0.6" width="1.4" height="7.4"/><rect x="13.2" y="0.6" width="1.4" height="7.4"/></g><rect x="0.3" y="7" width="2" height="1" fill="#3080e0"/></svg>
<svg style="left:414px;top:405px" width="16" height="9"><path d="M0.400 9 Q-0.200 3.600 2 1.200 Q3.800 -0.200 5.200 2 Q5.800 3 7.200 3.200 Q8.600 3 9.200 2 Q10.600 -0.200 12.400 1.200 Q14.600 3.600 14 9 Z" fill="#c4823c"/><path d="M1.800 9 Q1.600 4.400 3 2.800 Q4.200 3.400 4.400 9 Z M10.200 9 Q10.400 3.400 11.600 2.800 Q13 4.400 12.800 9 Z" fill="#e8b878"/><path d="M5 9 Q5.200 5 7.200 5 Q9.200 5 9.400 9 Z" fill="#f0dcc0"/></svg>
<div class="t" style="left:497px;top:407.500px;font-size:11px;line-height:14px;color:#202020;letter-spacing:-0.2px">[<span style="color:#c02020">x=</span>]</div>
<svg style="left:575px;top:405px" width="12" height="9"><path d="M1 3.400 q1.200-2.400 4-2.400 q3.600 .2 4.200 3 q.2 2.800-2.800 4.600 M3.400 4.600 q1-1.600 2.600-.8 q1.200 1.200-.4 3" fill="none" stroke="#d03030" stroke-width="1.1"/></svg>
<div style="left:826px;top:401px;width:270px;height:13px;background:#c0c0c0"></div>
<div style="left:826px;top:401px;width:270px;height:1px;background:#404040"></div>
<div style="left:826px;top:401px;width:1px;height:13px;background:#404040"></div>
<div style="left:827px;top:402px;width:63.5px;height:11px;background:#000"></div>
<div style="left:827px;top:413px;width:63.5px;height:1px;background:#fff"></div>
<div class="m" style="left:831.5px;top:403px;color:#fff">033CD4CC</div>
<div class="m" style="left:895px;top:403px;color:#000">754FEBE0</div>
<div style="left:956px;top:402px;width:1px;height:12px;background:#808080"></div>
<div class="m" style="left:960.5px;top:403px;color:#ff0000">return to user32.754</div>
<div style="left:0;top:0;width:0.6px;height:414px;background:#a0a0a0"></div>
<div style="left:0.6px;top:0;width:1.5px;height:414px;background:#666"></div>
</body></html>
